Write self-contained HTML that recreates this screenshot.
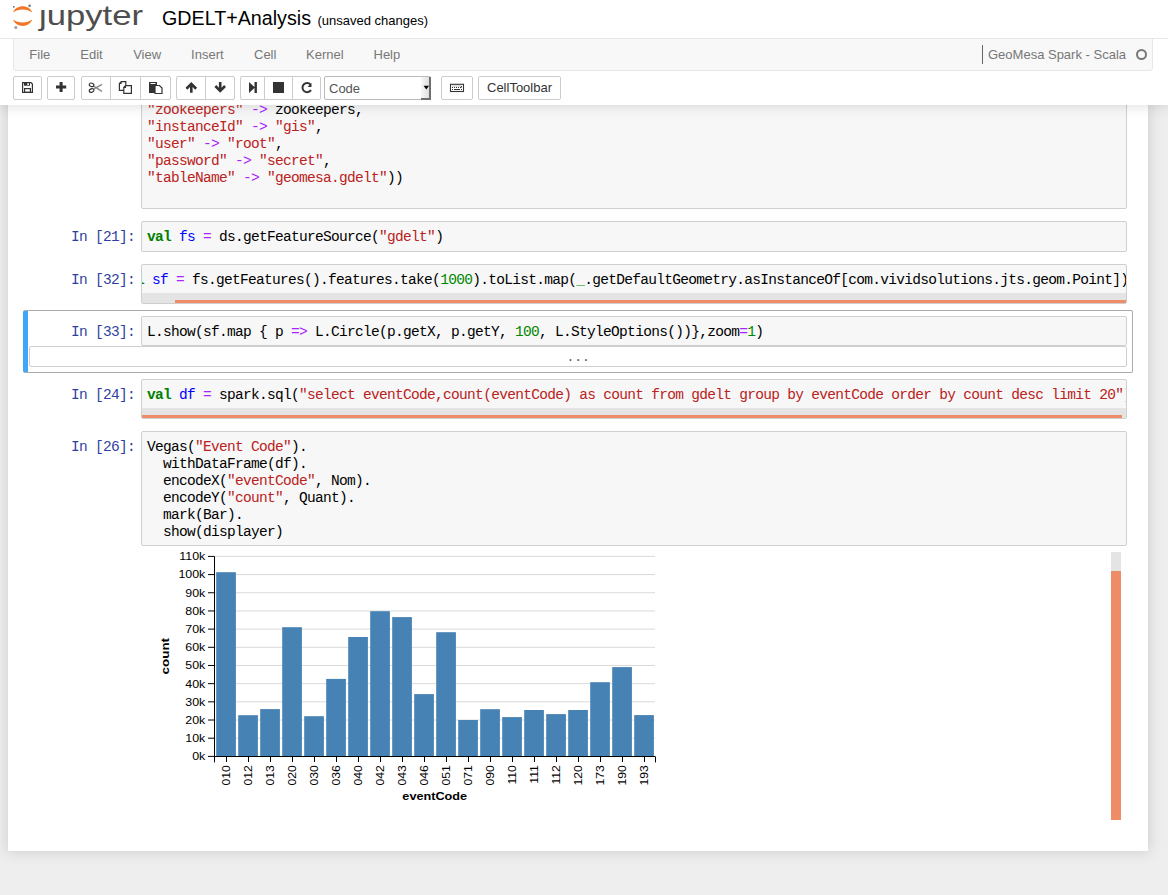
<!DOCTYPE html>
<html><head><meta charset="utf-8">
<style>
html,body{margin:0;padding:0;width:1168px;height:895px;overflow:hidden;background:#eeeeee;font-family:"Liberation Sans",sans-serif;}
.abs{position:absolute;}
#header{position:absolute;left:0;top:0;width:1168px;height:105px;background:#fff;box-shadow:0 0 12px 1px rgba(87,87,87,0.2);z-index:10;}
#nbc{position:absolute;left:8px;top:-300px;width:1140px;height:1151px;background:#fff;box-shadow:0 0 12px 1px rgba(87,87,87,0.2);}
.menubar{position:absolute;left:13px;top:38px;width:1138px;height:31px;background:#f8f8f8;border:1px solid #e7e7e7;border-radius:0 0 3px 3px;}
.mi{position:absolute;top:8px;font-size:13px;color:#777;line-height:15px;}
.btn{position:absolute;top:76px;height:22px;border:1px solid #ccc;border-radius:2px;background:#fff;box-sizing:content-box;}
.sep{position:absolute;top:77px;width:1px;height:22px;background:#ccc;}
.ia{position:absolute;left:141px;width:984px;background:#f7f7f7;border:1px solid #cfcfcf;border-radius:2px;overflow:hidden;}
.code{position:absolute;left:5px;font-family:"Liberation Mono",monospace;font-size:14.5px;letter-spacing:-0.7px;line-height:17px;white-space:pre;color:#000;}
.pr{position:absolute;font-family:"Liberation Mono",monospace;font-size:14.5px;letter-spacing:-0.7px;line-height:17px;white-space:pre;color:#303f9f;text-align:right;width:120px;left:15px;}
.k{color:#008000;font-weight:bold}
.v{color:#0000ff}
.o{color:#aa22ff}
.s{color:#ba2121}
.n{color:#008800}
.track{position:absolute;left:0;right:0;bottom:0;height:10px;background:#e4e4e4;}
.thumb{position:absolute;bottom:0;height:3px;background:#ee8c68;}
</style></head><body>

<div id="nbc"></div>

<!-- cell 1 partial -->
<div class="ia" style="top:60px;height:147px;">
<div class="code" style="top:41px;"><span class="s">"zookeepers"</span> <span class="o">-&gt;</span> zookeepers,
<span class="s">"instanceId"</span> <span class="o">-&gt;</span> <span class="s">"gis"</span>,
<span class="s">"user"</span> <span class="o">-&gt;</span> <span class="s">"root"</span>,
<span class="s">"password"</span> <span class="o">-&gt;</span> <span class="s">"secret"</span>,
<span class="s">"tableName"</span> <span class="o">-&gt;</span> <span class="s">"geomesa.gdelt"</span>))</div>
</div>

<!-- cell 21 -->
<div class="pr" style="top:229px;">In [21]:</div>
<div class="ia" style="top:221px;height:29px;">
<div class="code" style="top:7px;"><span class="k">val</span> <span class="v">fs</span> <span class="o">=</span> ds.getFeatureSource(<span class="s">"gdelt"</span>)</div>
</div>

<!-- cell 32 -->
<div class="pr" style="top:272px;">In [32]:</div>
<div class="ia" style="top:264px;height:38px;">
<div class="code" style="top:7px;left:-22px;"><span class="k">val</span> <span class="v">sf</span> <span class="o">=</span> fs.getFeatures().features.take(<span class="n">1000</span>).toList.map(<span class="n">_</span>.getDefaultGeometry.asInstanceOf[com.vividsolutions.jts.geom.Point])</div>
<div class="track"><div class="thumb" style="left:33px;right:0;"></div></div>
</div>

<!-- cell 33 selected -->
<div class="abs" style="left:23px;top:310px;width:1109px;height:61px;border:1px solid #ababab;border-radius:2px;border-left:0;background:linear-gradient(to right,#42a5f5 0,#42a5f5 5px,transparent 5px);"></div>
<div class="pr" style="top:324px;">In [33]:</div>
<div class="ia" style="top:316px;height:28px;">
<div class="code" style="top:7px;">L.show(sf.map { p <span class="o">=&gt;</span> L.Circle(p.getX, p.getY, <span class="n">100</span>, L.StyleOptions())},zoom<span class="o">=</span><span class="n">1</span>)</div>
</div>
<div class="abs" style="left:29px;top:346px;width:1096px;height:19px;border:1px solid #cfcfcf;border-radius:2px;background:#fff;"></div>
<div class="abs" style="left:566.5px;top:350px;font-family:'Liberation Mono';font-size:13px;color:#555;">...</div>

<!-- cell 24 -->
<div class="pr" style="top:387px;">In [24]:</div>
<div class="ia" style="top:379px;height:38px;">
<div class="code" style="top:7px;"><span class="k">val</span> <span class="v">df</span> <span class="o">=</span> spark.sql(<span class="s">"select eventCode,count(eventCode) as count from gdelt group by eventCode order by count desc limit 20"</span>)</div>
<div class="track"><div class="thumb" style="left:0;right:4px;"></div></div>
</div>

<!-- cell 26 -->
<div class="pr" style="top:439px;">In [26]:</div>
<div class="ia" style="top:431px;height:113px;">
<div class="code" style="top:7px;">Vegas(<span class="s">"Event Code"</span>).
  withDataFrame(df).
  encodeX(<span class="s">"eventCode"</span>, Nom).
  encodeY(<span class="s">"count"</span>, Quant).
  mark(Bar).
  show(displayer)</div>
</div>

<!-- output scrollbar -->
<div class="abs" style="left:1111px;top:552px;width:10px;height:19px;background:#e4e4e4;"></div>
<div class="abs" style="left:1111px;top:571px;width:10px;height:249px;background:#ee8c68;"></div>

<div id="chart"><svg class="abs" style="left:140px;top:545px" width="560" height="270" font-family="Liberation Sans">
<path d="M75,11.4H515M75,29.58H515M75,47.76H515M75,65.94H515M75,84.12H515M75,102.3H515M75,120.48H515M75,138.66H515M75,156.84H515M75,175.02H515M75,193.2H515M75,211.38H515" stroke="#d9d9d9" stroke-width="1" fill="none"/>
<g fill="#4682b4"><rect x="76.2" y="27.2" width="19.7" height="184.2"/><rect x="98.2" y="170.2" width="19.7" height="41.2"/><rect x="120.2" y="164.1" width="19.7" height="47.3"/><rect x="142.2" y="82.2" width="19.7" height="129.2"/><rect x="164.2" y="171.2" width="19.7" height="40.2"/><rect x="186.2" y="133.9" width="19.7" height="77.5"/><rect x="208.2" y="92.0" width="19.7" height="119.4"/><rect x="230.2" y="66.2" width="19.7" height="145.2"/><rect x="252.2" y="72.1" width="19.7" height="139.3"/><rect x="274.2" y="149.1" width="19.7" height="62.3"/><rect x="296.2" y="87.2" width="19.7" height="124.2"/><rect x="318.2" y="175.0" width="19.7" height="36.4"/><rect x="340.2" y="164.2" width="19.7" height="47.2"/><rect x="362.2" y="172.1" width="19.7" height="39.3"/><rect x="384.2" y="165.0" width="19.7" height="46.4"/><rect x="406.2" y="169.1" width="19.7" height="42.3"/><rect x="428.2" y="165.0" width="19.7" height="46.4"/><rect x="450.2" y="137.2" width="19.7" height="74.2"/><rect x="472.2" y="122.1" width="19.7" height="89.3"/><rect x="494.2" y="170.1" width="19.7" height="41.3"/></g>
<path d="M74.5,11.4V211.4M68,11.4H74.5M68,29.58H74.5M68,47.76H74.5M68,65.94H74.5M68,84.12H74.5M68,102.3H74.5M68,120.48H74.5M68,138.66H74.5M68,156.84H74.5M68,175.02H74.5M68,193.2H74.5M68,211.38H74.5M74.5,211.5H515M74.5,211.4V217.4M515.5,211.4V217.4M86.5,211.4V217M108.5,211.4V217M130.5,211.4V217M152.5,211.4V217M174.5,211.4V217M196.5,211.4V217M218.5,211.4V217M240.5,211.4V217M262.5,211.4V217M284.5,211.4V217M306.5,211.4V217M328.5,211.4V217M350.5,211.4V217M372.5,211.4V217M394.5,211.4V217M416.5,211.4V217M438.5,211.4V217M460.5,211.4V217M482.5,211.4V217M504.5,211.4V217" stroke="#000" stroke-width="1" fill="none"/>
<g font-size="11.6" fill="#000" transform="translate(65.3,0) scale(1.07,1) translate(-65.3,0)"><text x="65.3" y="15.3" text-anchor="end">110k</text><text x="65.3" y="33.48" text-anchor="end">100k</text><text x="65.3" y="51.66" text-anchor="end">90k</text><text x="65.3" y="69.84" text-anchor="end">80k</text><text x="65.3" y="88.02" text-anchor="end">70k</text><text x="65.3" y="106.2" text-anchor="end">60k</text><text x="65.3" y="124.38" text-anchor="end">50k</text><text x="65.3" y="142.56" text-anchor="end">40k</text><text x="65.3" y="160.74" text-anchor="end">30k</text><text x="65.3" y="178.92" text-anchor="end">20k</text><text x="65.3" y="197.1" text-anchor="end">10k</text><text x="65.3" y="215.28" text-anchor="end">0k</text></g>
<g font-size="11.6" fill="#000"><text transform="translate(90.0,220.2) rotate(-90) scale(1.05,1)" text-anchor="end">010</text><text transform="translate(112.0,220.2) rotate(-90) scale(1.05,1)" text-anchor="end">012</text><text transform="translate(134.0,220.2) rotate(-90) scale(1.05,1)" text-anchor="end">013</text><text transform="translate(156.0,220.2) rotate(-90) scale(1.05,1)" text-anchor="end">020</text><text transform="translate(178.0,220.2) rotate(-90) scale(1.05,1)" text-anchor="end">030</text><text transform="translate(200.0,220.2) rotate(-90) scale(1.05,1)" text-anchor="end">036</text><text transform="translate(222.0,220.2) rotate(-90) scale(1.05,1)" text-anchor="end">040</text><text transform="translate(244.0,220.2) rotate(-90) scale(1.05,1)" text-anchor="end">042</text><text transform="translate(266.0,220.2) rotate(-90) scale(1.05,1)" text-anchor="end">043</text><text transform="translate(288.0,220.2) rotate(-90) scale(1.05,1)" text-anchor="end">046</text><text transform="translate(310.0,220.2) rotate(-90) scale(1.05,1)" text-anchor="end">051</text><text transform="translate(332.0,220.2) rotate(-90) scale(1.05,1)" text-anchor="end">071</text><text transform="translate(354.0,220.2) rotate(-90) scale(1.05,1)" text-anchor="end">090</text><text transform="translate(376.0,220.2) rotate(-90) scale(1.05,1)" text-anchor="end">110</text><text transform="translate(398.0,220.2) rotate(-90) scale(1.05,1)" text-anchor="end">111</text><text transform="translate(420.0,220.2) rotate(-90) scale(1.05,1)" text-anchor="end">112</text><text transform="translate(442.0,220.2) rotate(-90) scale(1.05,1)" text-anchor="end">120</text><text transform="translate(464.0,220.2) rotate(-90) scale(1.05,1)" text-anchor="end">173</text><text transform="translate(486.0,220.2) rotate(-90) scale(1.05,1)" text-anchor="end">190</text><text transform="translate(508.0,220.2) rotate(-90) scale(1.05,1)" text-anchor="end">193</text></g>
<text transform="translate(29.3,111.2) rotate(-90)" text-anchor="middle" font-weight="bold" font-size="11.2" textLength="36.5" lengthAdjust="spacingAndGlyphs">count</text>
<text x="294.7" y="255.4" text-anchor="middle" font-weight="bold" font-size="11.4" textLength="64.7" lengthAdjust="spacingAndGlyphs">eventCode</text>
</svg></div>

<div id="header">
<svg class="abs" style="left:0;top:0" width="160" height="38">
<path d="M13,12.6 C16,4.2 29.5,4.2 32.2,12.6 C27,8.6 18,8.6 13,12.6 Z" fill="#f37726"/>
<path d="M13,19.6 C18,23.6 27,23.6 32.2,19.6 C29.5,28 16,28 13,19.6 Z" fill="#f37726"/>
<circle cx="29.6" cy="5.8" r="1.3" fill="#767677"/>
<circle cx="13.8" cy="6.8" r="0.9" fill="#616262"/>
<circle cx="15.8" cy="27.4" r="1.5" fill="#9e9e9e"/>
<text x="39" y="24.7" font-family="Liberation Sans" font-size="28" fill="#4e4e4e" textLength="104" lengthAdjust="spacingAndGlyphs">ȷupyter</text>
</svg>
<div class="abs" style="left:162px;top:6.7px;font-size:19.7px;line-height:22px;color:#000;">GDELT+Analysis</div>
<div class="abs" style="left:317.5px;top:13.3px;font-size:13px;line-height:15px;color:#000;">(unsaved changes)</div>
<div class="abs" style="left:0;top:38px;width:1168px;height:1px;background:#e7e7e7;"></div>
<div class="menubar">
<span class="mi" style="left:15.3px">File</span>
<span class="mi" style="left:66.3px">Edit</span>
<span class="mi" style="left:119.2px">View</span>
<span class="mi" style="left:177.1px">Insert</span>
<span class="mi" style="left:240px">Cell</span>
<span class="mi" style="left:292px">Kernel</span>
<span class="mi" style="left:359.5px">Help</span>
<span class="abs" style="left:968px;top:6px;width:1px;height:19px;background:#666;"></span>
<span class="mi" style="left:974px">GeoMesa Spark - Scala</span>
<span class="abs" style="left:1122px;top:10px;width:7px;height:7px;border:2px solid #777;border-radius:50%;"></span>
</div>
<div class="btn" style="left:13px;width:27px;"></div>
<div class="btn" style="left:47px;width:26px;"></div>
<div class="btn" style="left:81px;width:88px;"></div>
<div class="sep" style="left:110px"></div><div class="sep" style="left:140px"></div>
<div class="btn" style="left:176px;width:57px;"></div>
<div class="sep" style="left:205px"></div>
<div class="btn" style="left:240px;width:79px;"></div>
<div class="sep" style="left:264px"></div><div class="sep" style="left:292px"></div>
<div class="btn" style="left:324px;width:105px;border-color:#bbb;"></div>
<div class="abs" style="left:329px;top:81px;font-size:13px;line-height:15px;color:#555;">Code</div>
<div class="abs" style="left:421px;top:77px;width:8px;height:21px;background:linear-gradient(to right,#f8f8f8,#e0e0e0);border-right:2px solid #6f6f6f;border-bottom:2px solid #6f6f6f;"></div>
<div class="btn" style="left:441px;width:30px;"></div>
<div class="btn" style="left:478px;width:81px;"></div>
<div class="abs" style="left:487px;top:80px;font-size:13px;line-height:15px;color:#333;">CellToolbar</div>
<svg class="abs" style="left:0;top:0" width="600" height="104">
<g fill="#333">
<!-- save -->
<path d="M22.6,82.6 H31 L32.4,84 V92.4 H22.6 Z" fill="none" stroke="#333" stroke-width="1.2"/><rect x="24" y="82.5" width="6" height="3.2"/><rect x="27.3" y="83.2" width="1.6" height="1.8" fill="#fff"/><rect x="24.6" y="88.6" width="5.8" height="3.8" fill="none" stroke="#333" stroke-width="1.2"/>
<!-- plus -->
<path d="M59.6,82 H62.6 V85.5 H66.2 V88.5 H62.6 V92 H59.6 V88.5 H56 V85.5 H59.6 Z"/>
<!-- up -->
<path d="M191.3,82 L197.1,87.8 L195.2,89.7 L192.6,87.1 V92.8 H190 V87.1 L187.4,89.7 L185.5,87.8 Z"/>
<!-- down -->
<path d="M220.2,92.8 L226,87 L224.1,85.1 L221.5,87.7 V82 H218.9 V87.7 L216.3,85.1 L214.4,87 Z"/>
<!-- run -->
<path d="M249,82 L255,87.4 L249,93 Z M254.5,82 H256.9 V93 H254.5 Z"/>
<!-- stop -->
<rect x="273" y="82" width="11" height="11"/>
</g>
<g fill="none" stroke="#333">
<!-- restart -->
<path d="M310.5,84.5 A4.6,4.6 0 1 0 311,90" stroke-width="2"/>
<!-- scissors -->
<ellipse cx="91.6" cy="84.8" rx="2.4" ry="1.7" stroke-width="1.1" transform="rotate(18 91.6 84.8)"/>
<ellipse cx="91.6" cy="90.5" rx="2.4" ry="1.7" stroke-width="1.1" transform="rotate(-18 91.6 90.5)"/>
<path d="M94,86.3 L102,91.3 M94,88.9 L102,84.3" stroke-width="1.5" stroke="#8a8a8a"/>
<!-- copy -->
<path d="M121.2,81.6 H125.8 V85.4 M123.6,90.4 H119.4 V83.6 L121.2,81.6 M125.6,85.6 H131.4 V93.4 H123.8 V87.6 Z" stroke-width="1.2"/>
<!-- keyboard -->
<rect x="450.5" y="84.3" width="13" height="7.2" stroke-width="1.1"/>
</g>
<path d="M311.5,83 V87 H307.5 Z" fill="#333"/><path d="M119,84 L121.6,81.2 V84 Z M123.4,88 L126,85.2 V88 Z" fill="#333"/>
<!-- paste -->
<path d="M149,82 H157 V85 H156 V93 H149 Z" fill="#333"/>
<path d="M155,85.5 H159.5 L162,88 V93.5 H155 Z" fill="#fff" stroke="#333" stroke-width="1.2"/>
<path d="M150.5,83 H155.5 V84 H150.5Z" fill="#fff"/>
<g fill="#333"><rect x="452" y="87" width="1" height="1"/><rect x="454" y="87" width="1" height="1"/><rect x="456" y="87" width="1" height="1"/><rect x="458" y="87" width="1" height="1"/><rect x="460" y="87" width="1.5" height="1"/><rect x="461" y="86" width="1" height="1"/><rect x="452" y="89" width="1" height="1"/><rect x="454" y="89" width="6" height="1"/><rect x="461" y="89" width="1" height="1"/></g>
<g fill="#bbb"><rect x="452" y="85.5" width="9" height="1"/></g>
<!-- select arrow -->
<path d="M423.6,85.8 H429 L426.3,89.4 Z" fill="#000"/>
</svg>
</div>

</body></html>
